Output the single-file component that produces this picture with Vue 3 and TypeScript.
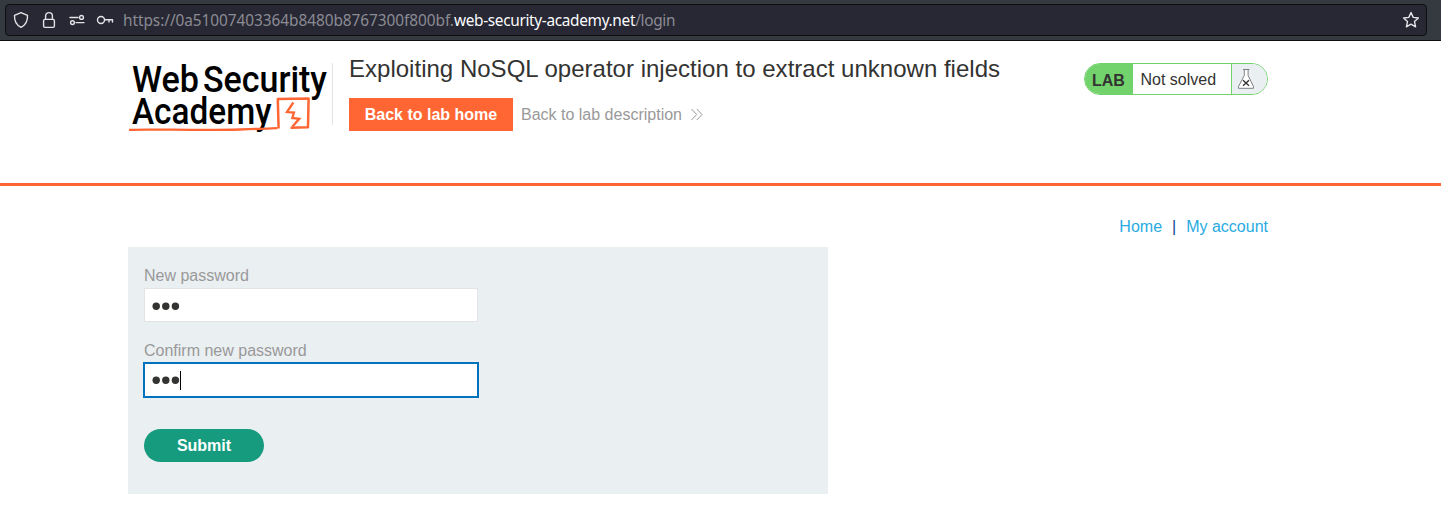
<script setup lang="ts">
import { ref } from 'vue'

interface Field { id: string; label: string; length: number }

const fields: Field[] = [
  { id: 'new', label: 'New password', length: 3 },
  { id: 'confirm', label: 'Confirm new password', length: 3 },
]
const focused = ref<string>('confirm')
</script>

<template>
  <div class="page">
    <div class="toolbar">
      <div class="urlbar">
        <svg class="tools" width="112" height="30" viewBox="6 5 112 30" fill="none" stroke="#e4e4e8" stroke-width="1.4" stroke-linejoin="round" stroke-linecap="round">
          <path d="M21 12.6 L27.5 15.4 C27.8 20.5 25.6 25 21 27.4 C16.4 25 14.2 20.5 14.5 15.4 Z" />
          <rect x="43.6" y="19.4" width="10.8" height="8" rx="1.4" />
          <path d="M45.6 19.2 V16 a3.4 3.4 0 0 1 6.8 0 V19.2" />
          <path d="M70 17.5 H78 M76 22.6 H84" />
          <circle cx="81.5" cy="17.4" r="1.9" />
          <circle cx="72.5" cy="22.6" r="1.9" />
          <circle cx="101" cy="20" r="3.5" />
          <path d="M104.8 19.7 H112.5 V22 M109 20 V22" />
        </svg>
        <span class="url"><span class="host-id">https://0a51007403364b8480b8767300f800bf.</span><b>web-security-academy.net</b>/login</span>
        <svg class="star" width="18" height="18" viewBox="0 0 18 18" fill="none" stroke="#e4e4e8" stroke-width="1.4" stroke-linejoin="round">
          <path d="M9 1.5 L11.2 6.4 L16.4 7 L12.5 10.6 L13.6 15.8 L9 13.2 L4.4 15.8 L5.5 10.6 L1.6 7 L6.8 6.4 Z" />
        </svg>
      </div>
    </div>

    <header class="lab-header">
      <svg class="logo" width="205" height="84" viewBox="128 55 205 84">
        <g class="logo-text">
          <text x="132" y="92" textLength="67" lengthAdjust="spacingAndGlyphs">Web</text>
          <text x="203" y="92" textLength="124" lengthAdjust="spacingAndGlyphs">Security</text>
          <text x="132" y="124" textLength="139.5" lengthAdjust="spacingAndGlyphs">Academy</text>
        </g>
        <g fill="none" stroke="#ff6633">
          <path d="M129 129.8 C150 128.8 200 130.8 240 129.5 S268 128.2 277.5 128.2" stroke-width="2.3" />
          <path d="M278.6 128.5 L277.8 98.9 L308.6 98.4 L308 127.2 L290.5 127.8" stroke-width="2.5" stroke-linejoin="round" />
          <path d="M293.3 102.5 L287 112.1 L294 112.6 L292.3 118 L299.3 118.8 L292.5 126.5" stroke-width="2.3" />
        </g>
      </svg>
      <div class="title-block">
        <h2>Exploiting NoSQL operator injection to extract unknown fields</h2>
        <div class="actions">
          <a class="home-button">Back to lab home</a>
          <a class="description">Back to lab description
            <svg width="13" height="12" viewBox="0 0 13 12" fill="none" stroke="#999" stroke-width="1"><path d="M1.5 0 L6.7 5.5 L1.5 11 M6.8 0 L12 5.5 L6.8 11" /></svg>
          </a>
        </div>
      </div>
      <div class="status">
        <span class="lab">LAB</span>
        <span class="state">Not solved</span>
        <span class="flask">
          <svg width="18" height="22" viewBox="0 0 18 22" fill="none">
            <path d="M7.2 1.5 V7.5 L1.5 20 H16.5 L11 7.5 V1.5 Z" fill="#fff" />
            <path d="M6 1.5 H12.4 M7.3 1.5 V7.5 L1.5 18.5 V20.3 H16.5 V18.5 L11.1 7.5 V1.5" stroke="#808080" stroke-width="1" />
            <path d="M6 12.2 L12 17.8 M12 12.2 L6 17.8" stroke="#333" stroke-width="1.4" />
          </svg>
        </span>
      </div>
    </header>

    <main>
      <nav><a>Home</a><span>|</span><a>My account</a></nav>
      <form class="panel" @submit.prevent>
        <div v-for="f in fields" :key="f.id" class="field">
          <label>{{ f.label }}</label>
          <div class="input" :class="{ focused: focused === f.id }" @click="focused = f.id">
            <svg class="dots" width="29" height="8" viewBox="0 0 29 8" fill="#333332">
              <circle v-for="n in f.length" :key="n" :cx="4.2 + (n - 1) * 9.6" cy="4.3" r="3.7" />
            </svg>
            <i v-if="focused === f.id" class="caret"></i>
          </div>
        </div>
        <button type="submit">Submit</button>
      </form>
    </main>
  </div>
</template>

<style>
body { background: #fff; }
</style>

<style scoped>
.page { height: 509px; overflow: hidden; font: 16px/19px "Liberation Sans", Arial, sans-serif; color: #333332; }
.toolbar { box-sizing: border-box; height: 41px; padding: 4px 14px 4px 5px; background: #353940; border-bottom: 1px solid #0d0e12; }
.urlbar { box-sizing: border-box; height: 32px; display: flex; align-items: center; background: #272833; border: 1px solid #0d0e12; border-radius: 4px; padding-right: 6px; }
.tools { flex: none; }
.url { flex: 1; margin-left: 5px; padding-top: 2px; font: 15.4px/22px "Noto Sans", sans-serif; letter-spacing: -.33px; color: #8b8b93; white-space: nowrap; }
.host-id { letter-spacing: -.06px; }
.url b { font-weight: 400; color: #fbfbfe; }
.lab-header { box-sizing: border-box; height: 145px; display: flex; align-items: flex-start; padding: 14px 173px 0 128px; border-bottom: 3px solid #ff6633; }
.logo { flex: none; overflow: visible; }
.logo-text { font: 500 37.5px Roboto, sans-serif; fill: #000; }
.title-block { height: 62px; margin-top: 8px; margin-left: -1px; padding-left: 16px; border-left: 1px solid #e3e3e3; flex: 1; }
h2 { margin: -8px 0 15px; font-size: 24px; font-weight: 400; line-height: 28px; letter-spacing: .015px; white-space: nowrap; }
.actions { display: flex; align-items: center; gap: 8px; }
.home-button { box-sizing: border-box; width: 164px; height: 33px; text-align: center; line-height: 33px; background: #ff6633; color: #fff; font-weight: 700; }
.description { display: flex; align-items: center; gap: 8px; color: #999; }
.status { box-sizing: border-box; display: flex; width: 184px; height: 32px; margin-top: 8px; border: 1px solid #72d26c; border-radius: 16px; overflow: hidden; line-height: 31px; }
.lab { width: 48px; box-sizing: border-box; padding: 1px 0 0 7px; background: #72d26c; font-weight: 700; }
.state { flex: 1; padding-left: 7.5px; }
.flask { box-sizing: border-box; width: 36px; padding: 4px 0 0 5px; border-left: 1px solid #72d26c; background: #eaeff2; line-height: 0; }
main { padding: 31px 173px 0 128px; }
nav { display: flex; justify-content: flex-end; gap: 10px; color: #0b4a8c; }
nav a { color: #29abe2; }
.panel { box-sizing: border-box; width: 700px; height: 247px; margin-top: 11px; padding: 19px 16px; background: #eaeff2; }
.field { height: 75px; }
label { display: block; color: #999; }
.input { box-sizing: border-box; display: flex; align-items: center; width: 334px; height: 34px; margin-top: 3px; padding: 2px 0 0 7px; border: 1px solid #e3e3e3; background: #fff; }
.input.focused { width: 336px; height: 36px; margin: 2px 0 0 -1px; border: 2px solid #0071bc; padding-top: 0; }
.dots { flex: none; }
.caret { width: 1px; height: 19px; margin-left: -1px; background: #000; }
button { display: block; width: 120px; height: 33px; margin-top: 13px; padding: 0; border: 0; border-radius: 17px; background: #169b7f; color: #fff; font: 700 16px "Liberation Sans", Arial, sans-serif; }
</style>
